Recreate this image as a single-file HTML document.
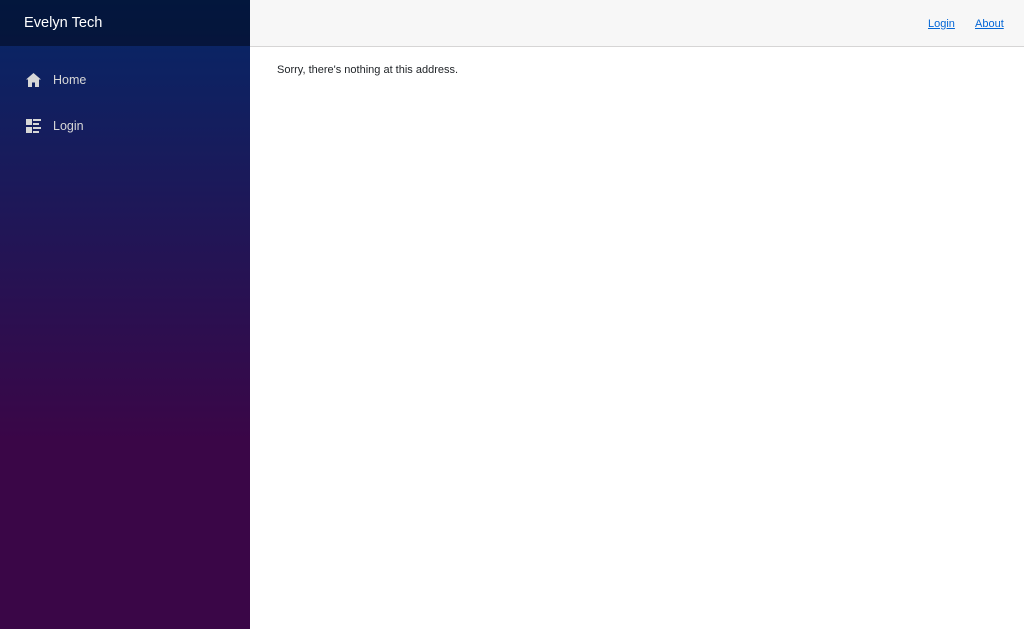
<!DOCTYPE html>
<html><head><style>
body{margin:0;width:1024px;height:629px;overflow:hidden;font-family:"Liberation Sans",Arial,sans-serif;position:relative;background:#fff}
.side{position:absolute;left:0;top:0;width:250px;height:629px;background:linear-gradient(180deg,rgb(5,39,103) 0%,#3a0647 70%)}
.brand{height:46px;background:rgba(0,0,0,0.4);color:#fff;font-size:14.6px;line-height:47px;padding-left:24px}
.nav{position:absolute;left:26px;color:#d7d7d7;font-size:12.5px;display:flex;align-items:center}
.nav svg{margin-right:12px}
.top{position:absolute;left:250px;top:0;right:0;height:47px;background:#f7f7f7;border-bottom:1px solid #d6d5d5;box-sizing:border-box}
.top a{position:absolute;top:18px;font-size:11px;color:#0366d6;text-decoration:underline}
.msg{position:absolute;left:277px;top:64px;font-size:11px;color:#212529}
</style></head><body>
<div class="side"><div class="brand">Evelyn Tech</div>
<div class="nav" style="top:73px"><svg width="15" height="14" viewBox="0 0 15 14"><path d="M7.5 0L0 6.5h2V14h4V9.5h3V14h4V6.5h2z" fill="#d7d7d7"/></svg>Home</div>
<div class="nav" style="top:119px"><svg width="15" height="14" viewBox="0 0 15 14" fill="#d7d7d7"><rect x="0" y="0" width="6" height="6"/><rect x="0" y="8" width="6" height="6"/><rect x="7" y="0" width="8" height="2"/><rect x="7" y="4" width="6" height="2"/><rect x="7" y="8" width="8" height="2"/><rect x="7" y="12" width="6" height="2"/></svg>Login</div>
</div>
<div class="top"><a style="left:678px">Login</a><a style="left:725px">About</a></div>
<div class="msg">Sorry, there's nothing at this address.</div>
</body></html>
